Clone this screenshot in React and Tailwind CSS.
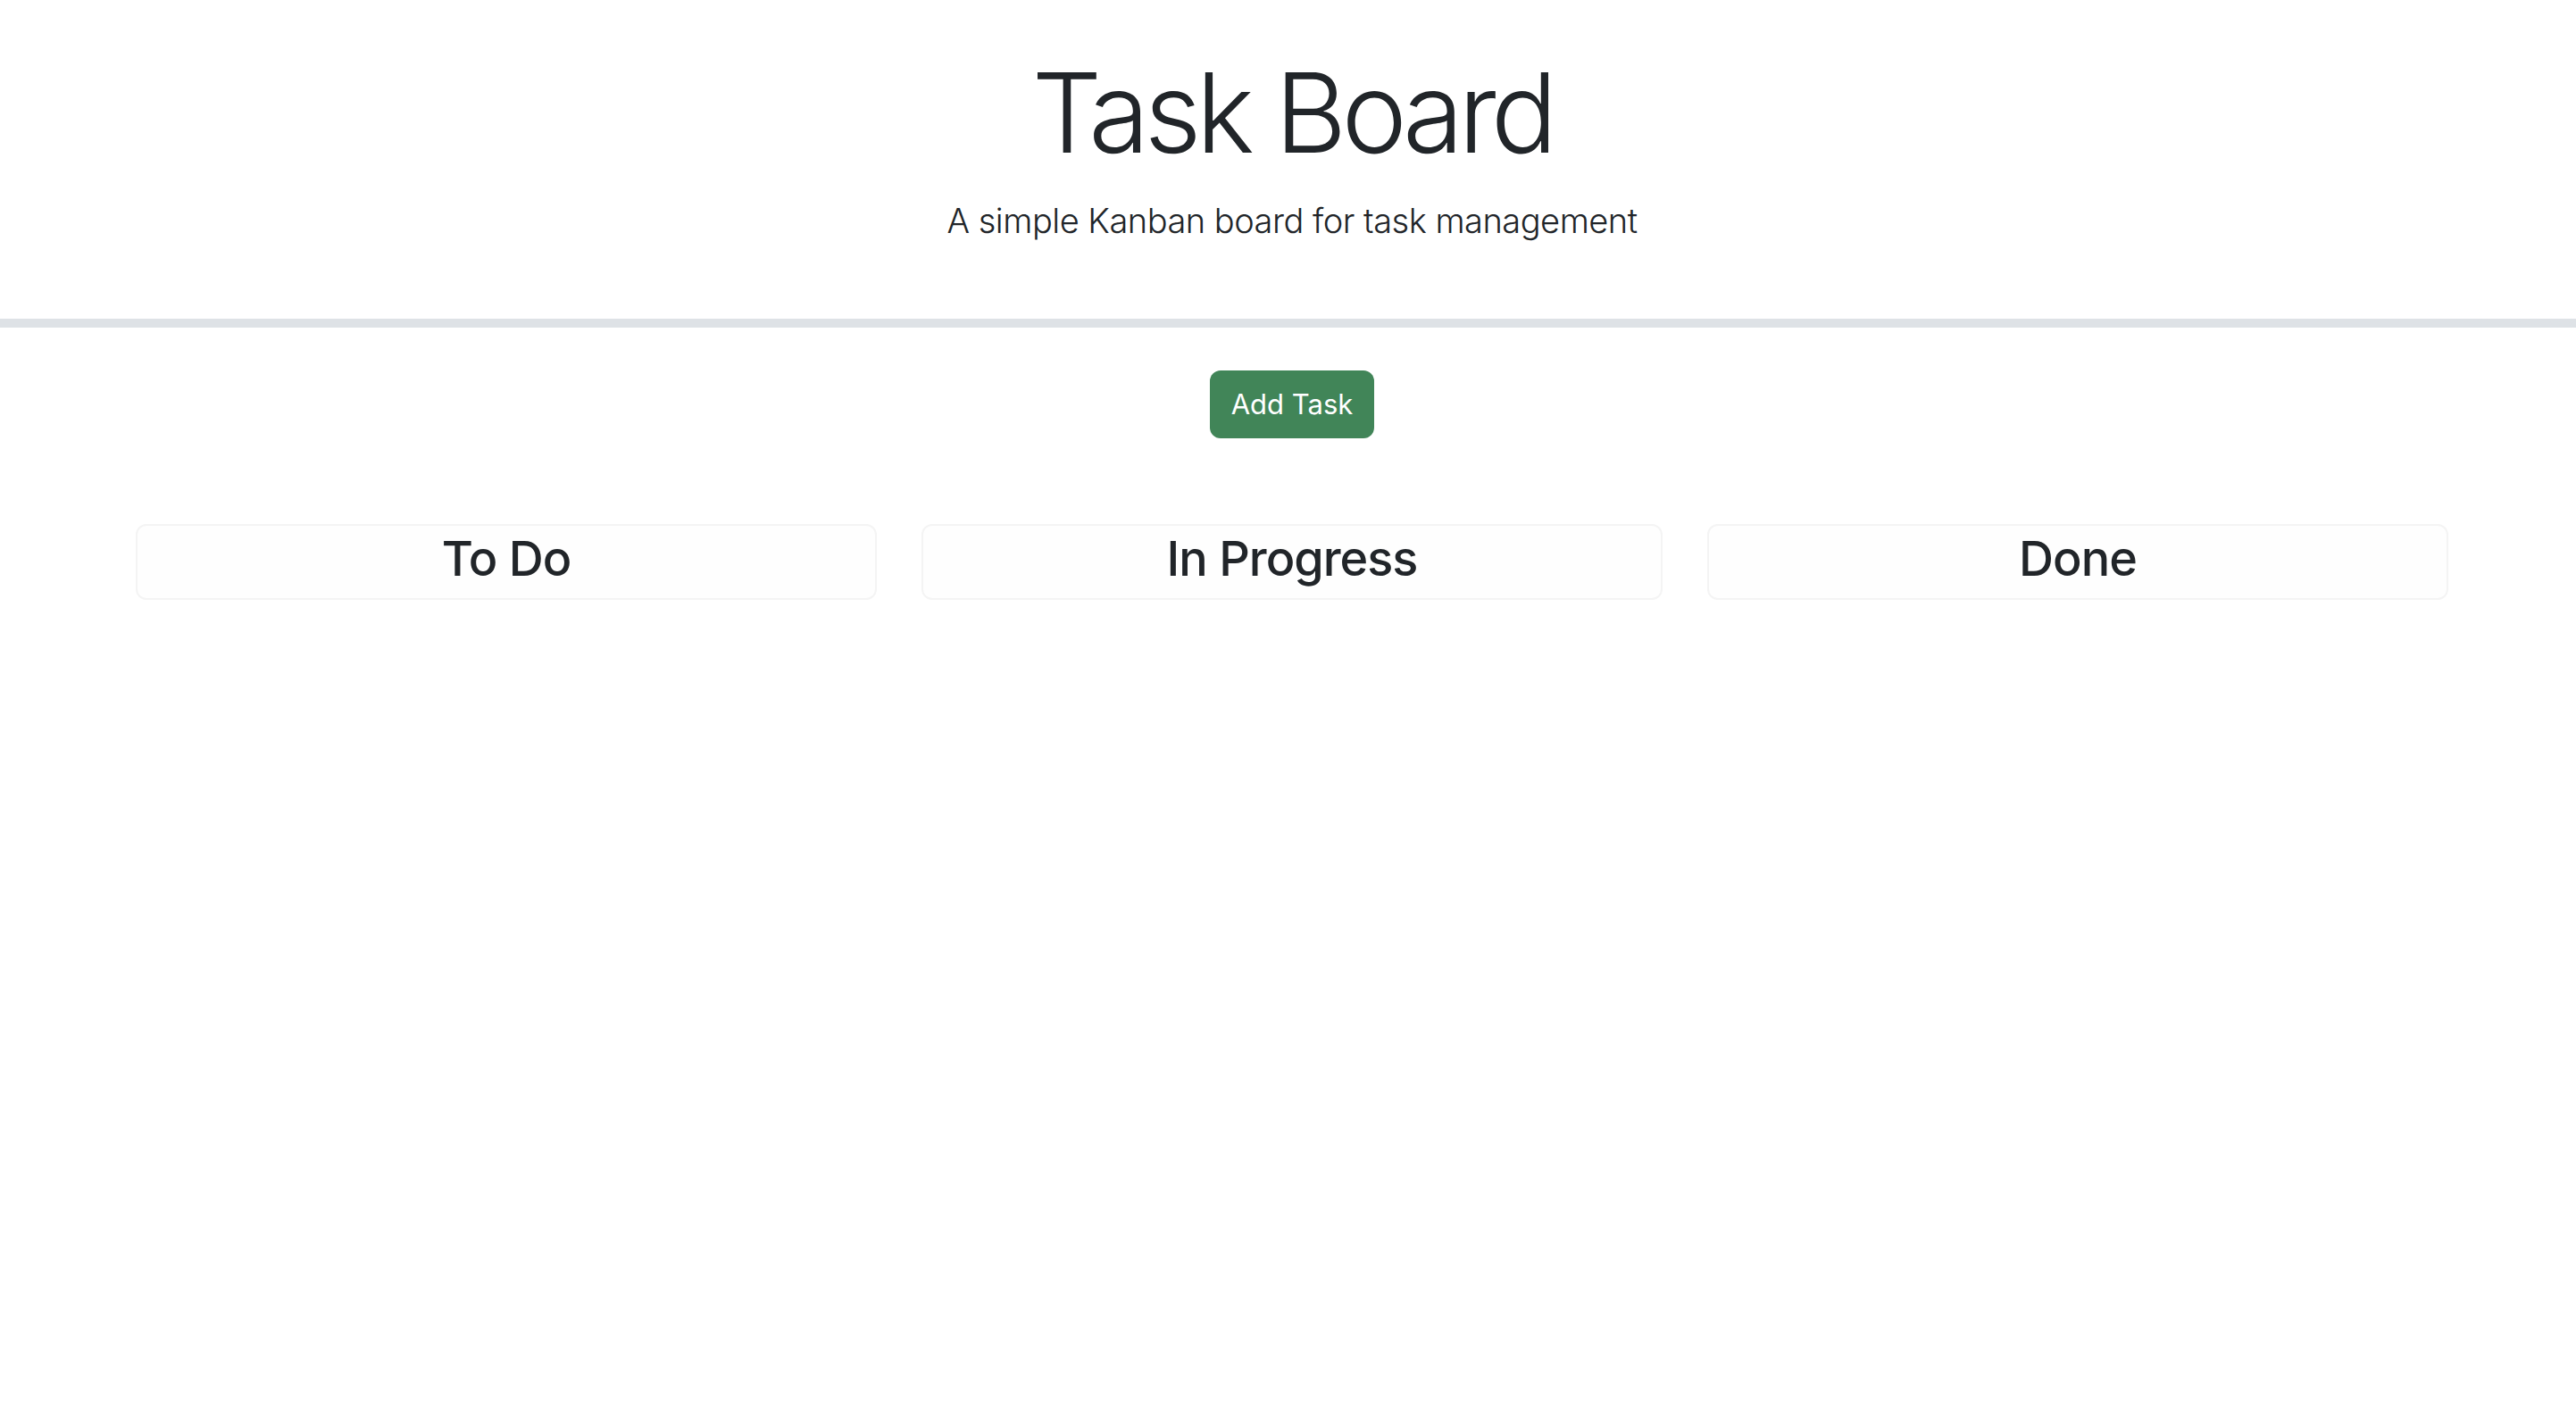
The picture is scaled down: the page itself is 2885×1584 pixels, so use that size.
import React from "react";

const columns = ["To Do", "In Progress", "Done"];

function Column({ title }) {
  return (
    <div className="w-[830px] h-[85px] pt-[5px] text-center bg-[#fefefe] border-2 border-[#f4f4f4] rounded-[12px]">
      <h3 className="text-[54px] leading-[1.2] font-medium tracking-[-1px] text-[#212529]">
        {title}
      </h3>
    </div>
  );
}

function App() {
  return (
    <div
      className="min-h-screen bg-white text-[#212529]"
      style={{ fontFamily: "Inter, 'Noto Sans', sans-serif" }}
    >
      <header className="pt-[52px] h-[367px] text-center border-b-[10px] border-[#dee2e6]">
        <h1 className="pl-[9px] text-[124px] leading-[1.2] font-light tracking-[-6px]">
          Task Board
        </h1>
        <p className="pl-[9px] mt-[18px] text-[38px] leading-[1.5] font-light tracking-[-0.5px]">
          A simple Kanban board for task management
        </p>
      </header>

      <div className="pl-[9px] flex justify-center pt-[48px]">
        <button className="w-[184px] h-[76px] rounded-[12px] bg-[#418558] text-white text-[31px] leading-[1.5]">
          Add Task
        </button>
      </div>

      <div className="pl-[9px] mt-[96px] flex justify-center gap-[50px]">
        {columns.map((title) => (
          <Column key={title} title={title} />
        ))}
      </div>
    </div>
  );
}

export default App;
